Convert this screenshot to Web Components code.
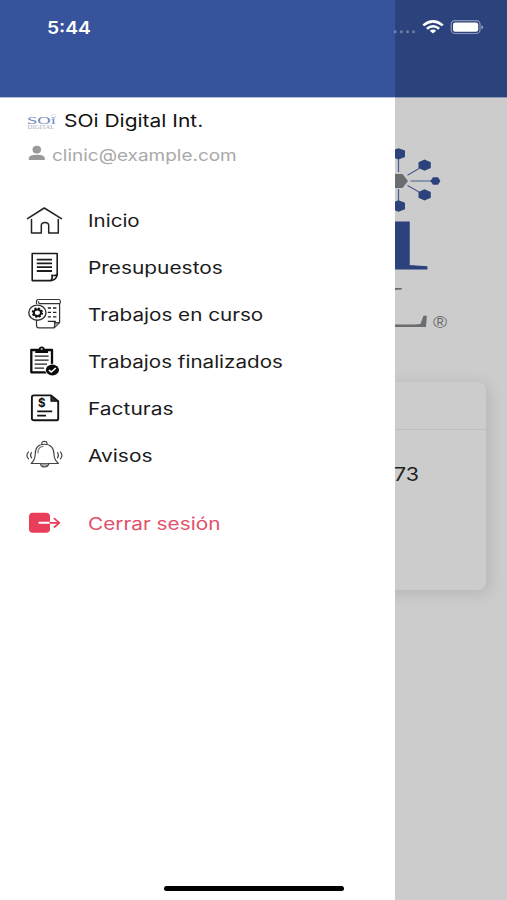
<!DOCTYPE html>
<html lang="es">
<head>
<meta charset="utf-8">
<title>SOi Digital</title>
<style>
  body {
    margin: 0;
    width: 507px;
    height: 900px;
    overflow: hidden;
    background: #fff;
    font-family: Inter, "Liberation Sans", sans-serif;
  }
</style>
</head>
<body>
<app-shell>
  <clinic-page slot="page"></clinic-page>
  <side-drawer slot="drawer">
    <user-card slot="user" name="SOi Digital Int." email="clinic@example.com"></user-card>
    <menu-item icon="home" width="52">Inicio</menu-item>
    <menu-item icon="budget" width="135">Presupuestos</menu-item>
    <menu-item icon="progress" width="175">Trabajos en curso</menu-item>
    <menu-item icon="done" width="195">Trabajos finalizados</menu-item>
    <menu-item icon="invoice" width="85">Facturas</menu-item>
    <menu-item icon="bell" width="64">Avisos</menu-item>
    <menu-item icon="logout" width="132" class="danger">Cerrar sesión</menu-item>
  </side-drawer>
  <status-bar slot="status" time="5:44"></status-bar>
</app-shell>

<script>
const define = (name, css, html, setup) => {
  const template = document.createElement('template');
  template.innerHTML = `<style>${css}</style>${html}`;

  customElements.define(name, class extends HTMLElement {
    connectedCallback() {
      if (this.shadowRoot) return;
      let shadow = this.attachShadow({ mode: 'open' });
      shadow.appendChild(template.content.cloneNode(true));
      setup?.(this, shadow);
    }
  });
};

const icons = {
  home: `<g fill="none" stroke="#222" stroke-width="1.5" stroke-linecap="round" stroke-linejoin="round">
    <path d="M1.5 18.6 18.3 8 35.4 18.6"/>
    <path d="M5.5 19.5V33H15.3V25.4Q15.5 22.4 19 22.4T22.7 25.4V33H32.3V19.5"/></g>`,
  budget: `<g fill="none" stroke="#1c1c1c" stroke-width="1.6" stroke-linejoin="round">
    <path d="M6.2 6.5H31.2V28.3Q29.5 33.3 25 33.6H6.2Z"/>
    <path d="M25 33.4Q26.8 31.5 25.9 28.2Q29 29.2 31.2 27.5"/>
    <path d="M10.8 12.7H26M10.8 16.3H26M10.8 20.1H26M10.8 24H26" stroke-width="1.8"/></g>`,
  progress: `<g fill="none" stroke="#333" stroke-width="1.2" stroke-linejoin="round">
    <path d="M10.5 10V7.3Q10.5 5.5 13 5.5H33Q34.4 5.5 34.4 7.5T33.4 9.7H13.6Q12.2 9.2 12.6 7.4"/>
    <path d="M33.6 9.7V28.6L28.2 33.8H12.6Q10.5 33.8 10.5 31.6V26"/>
    <path d="M28 33.6Q29.4 31.2 28.4 28.4Q31 29.2 33.4 28.4" fill="#aaa"/>
    <ellipse cx="11.4" cy="18.7" rx="8.6" ry="7.6" fill="#fff" stroke-width="1.4"/>
    <ellipse cx="11.4" cy="18.7" rx="3.6" ry="3.2" stroke="#111" stroke-width="2"/>
    <ellipse cx="11.4" cy="18.7" rx="5" ry="4.5" stroke="#111" stroke-width="1.4" stroke-dasharray="2.1 1.63"/>
    <path d="M21.8 14H25M27 14H30.4M21.8 18.4H25M27 18.4H30.4M21.8 22.8H25M27 22.8H30.4M21.8 27.4H29.8" stroke="#222" stroke-width="1.3"/></g>`,
  done: `<g>
    <path d="M5.3 9H26V31.3H5.3Z" fill="#fff" stroke="#0b0b0b" stroke-width="2.3" stroke-linejoin="round"/>
    <path d="M9.3 11.9V9.6Q9.6 8.4 12.7 8.2Q13 5.6 15.7 5.6T18.8 8.2Q21.6 8.4 22 9.6V11.9Z" fill="#0b0b0b"/>
    <ellipse cx="15.7" cy="8" rx="1.1" ry=".8" fill="#fff"/>
    <path d="M8.6 15.2H22.6M8.6 19.1H22.6M8.6 23.1H21M8.6 27.1H18" stroke="#222" stroke-width="1.3"/>
    <ellipse cx="26.4" cy="29" rx="7.3" ry="6.2" fill="#fff"/>
    <ellipse cx="26.4" cy="29" rx="6.6" ry="5.4" fill="#0b0b0b"/>
    <path d="M22.9 29.1 25.3 31 29.8 27" fill="none" stroke="#fff" stroke-width="1.6"/></g>`,
  invoice: `<g fill="none" stroke="#151515" stroke-width="1.9" stroke-linejoin="round">
    <path d="M8 7.4H25L32.2 13.2V30.4Q32.2 32.3 30 32.3H8Q5.9 32.3 5.9 30.4V9.3Q5.9 7.4 8 7.4Z"/>
    <path d="M25 7.6V13.2H32Z" fill="#333" stroke-width="1.2"/>
    <path d="M11.2 23.4H26.2M11.2 27.7H20" stroke-width="1.7"/></g>
    <text x="15.8" y="19.3" text-anchor="middle" font-size="11.5" font-weight="700" fill="#111">$</text>`,
  bell: `<g fill="none" stroke="#444" stroke-width="1.15" stroke-linejoin="round" stroke-linecap="round">
    <path d="M15.8 9.4V8Q16 6.4 18.4 6.4T21 8V9.4"/>
    <path d="M5.2 28.5Q9.1 25 9.2 19.5Q9 9.2 18.4 9.2T28 19.5Q28.2 25 32.5 28.5Z"/>
    <path d="M12 18Q11.8 12 17 11.4" stroke="#777"/>
    <path d="M14.4 28.8Q15.2 32 18.5 32T22.9 28.8" fill="#aaa"/>
    <path d="M5.5 17.5Q3.6 20.2 5.5 23M2.5 16.8Q-.7 20.3 2.5 23.8M31.5 17.5Q33.4 20.2 31.5 23M34.4 16.8Q37.5 20.3 34.4 23.8"/></g>`,
  logout: `<g fill="none" stroke-linecap="round" stroke-linejoin="round">
    <rect x="3" y="9.8" width="21" height="19.9" rx="3.8" fill="#e83e5a"/>
    <path d="M13.3 19.8H24" stroke="#fff" stroke-width="1.9"/>
    <path d="M24.2 19.8H33.2M28.4 15.6 33.4 19.8 28.4 24" stroke="#e83e5a" stroke-width="1.7"/></g>`
};

// text stretched sideways to a given width
define('wide-text', `
:host {
  display: block;
  width: var(--w);
  white-space: nowrap;
}
span {
  display: inline-block;
  transform-origin: 0 50%;
}`, `<span><slot></slot></span>`, (host, shadow) => {
  const w = Number(host.getAttribute('width'));
  const span = shadow.querySelector('span');
  host.style.setProperty('--w', w + 'px');
  span.style.transform = `scaleX(${w / span.offsetWidth})`;
});

define('menu-item', `
:host {
  display: flex;
  align-items: center;
  gap: 24px;
  height: 47px;
  color: #1b1b1b;
  font-size: 17px;
  line-height: 24px;
}
:host(.danger) {
  margin-top: 21px;
  color: #e3506a;
}
svg {
  flex: none;
  overflow: visible;
}
wide-text {
  padding-top: 1px;
}`, `<svg width="38" height="40" viewBox="0 0 38 40"></svg>`, (host, shadow) => {
  shadow.querySelector('svg').innerHTML = icons[host.getAttribute('icon')];
  const text = document.createElement('wide-text');
  text.setAttribute('width', host.getAttribute('width'));
  text.append(document.createElement('slot'));
  shadow.append(text);
});

define('user-card', `
:host {
  display: grid;
  gap: 10px;
}
div {
  display: flex;
  align-items: center;
  gap: 7px;
  height: 24px;
  font-size: 17.5px;
  line-height: 24px;
  color: #111;
}
.email {
  font-size: 16.5px;
  color: #a9a9a9;
}
.email svg {
  margin-top: -4px;
}`, `
<div class="name">
  <svg width="31" height="18" viewBox="0 0 31 18" font-family="Liberation Serif, serif">
    <text x="1" y="12.3" font-size="11" fill="#7189bd" textLength="29" lengthAdjust="spacingAndGlyphs">SOi</text>
    <text x="1.5" y="16.8" font-size="5.2" fill="#a9aeb8" textLength="27" lengthAdjust="spacingAndGlyphs">DIGITAL</text>
    <circle cx="27.5" cy="4.6" r="2.3" fill="none" stroke="#9db0d6" stroke-width=".8" stroke-dasharray="1 .8"/>
  </svg>
</div>
<div class="email">
  <svg width="19" height="20" viewBox="0 0 19 20" fill="#999">
    <ellipse cx="10.8" cy="6.6" rx="4.3" ry="3.9"/>
    <path d="M2.8 17V15Q3.4 11.8 10.8 11.8T18.8 15V17Z"/>
  </svg>
</div>`, (host, shadow) => {
  const widths = { name: 139, email: 185 };
  for (const key in widths) {
    const text = document.createElement('wide-text');
    text.setAttribute('width', widths[key]);
    text.textContent = host.getAttribute(key);
    shadow.querySelector('.' + key).append(text);
  }
});

define('side-drawer', `
:host {
  display: flex;
  flex-direction: column;
  width: 395px;
  height: 900px;
  background: #fff;
}
header {
  flex: none;
  height: 97px;
  background: #36539b;
  border-bottom: 1px solid #b5c1df;
}
section {
  padding: 11px 26px 0;
}
nav {
  padding: 29.5px 26px 0;
}`, `<header></header><section><slot name="user"></slot></section><nav><slot></slot></nav>`);

define('status-bar', `
:host {
  display: flex;
  justify-content: space-between;
  height: 54px;
  padding: 0 23px 0 47px;
  color: #fff;
  font-size: 17.5px;
  font-weight: 600;
  line-height: 55px;
}`, `
<svg width="92" height="54" viewBox="392 0 92 54">
  <g fill="#fff" opacity=".32"><circle cx="395.2" cy="31.7" r="1.5"/><circle cx="401.4" cy="31.7" r="1.5"/><circle cx="407.5" cy="31.7" r="1.5"/><circle cx="413.5" cy="31.7" r="1.5"/></g>
  <g fill="none" stroke="#fff" stroke-width="2.5">
    <path d="M423.3 25.4Q433 17.4 442.8 25.4"/>
    <path d="M426.9 28.8Q433 23.7 439.2 28.8"/>
  </g>
  <path d="M429.8 30.8Q433 28.3 436.2 30.8L433 33.6Z" fill="#fff"/>
  <rect x="451.2" y="20.7" width="28.8" height="12.8" rx="3.6" fill="none" stroke="#fff" stroke-opacity=".45" stroke-width="1.2"/>
  <rect x="453" y="22.4" width="25.2" height="9.4" rx="2.2" fill="#fff"/>
  <path d="M481.4 25.2Q483.2 25.7 483.2 27.2T481.4 29.2Z" fill="#fff" opacity=".5"/>
</svg>`, (host, shadow) => {
  const clock = document.createElement('wide-text');
  clock.setAttribute('width', 44);
  clock.textContent = host.getAttribute('time');
  shadow.querySelector('svg').before(clock);
});

define('result-card', `
:host {
  display: grid;
  grid-template-rows: 48px 1fr;
  height: 208px;
  margin: 0 21px;
  border-radius: 8px;
  background: #fff;
  box-shadow: 3px 3px 16px rgba(0, 0, 0, .12);
}
header {
  border-bottom: 1px solid #eee;
}
div {
  display: flex;
  justify-content: flex-end;
  padding: 32px 67px 0 0;
  font-size: 18px;
  line-height: 26px;
  color: #222;
}`, `<header></header><div><slot></slot></div>`);

define('clinic-page', `
:host {
  display: flex;
  flex-direction: column;
  height: 900px;
  background: #fff;
}
header {
  height: 97px;
  background: #36539b;
  border-bottom: 1px solid #b5c1df;
}
svg {
  display: block;
  margin-bottom: 24px;
}`, `
<header></header>
<svg width="507" height="260" viewBox="0 98 507 260" font-family="Liberation Serif, serif">
  <g stroke="#5d75b4" stroke-width="1.2">
    <path d="M398.5 159V172M398.5 189V201M407.5 175.2 419.5 168.3M407.5 185.5 419.5 192.3M410.5 181H432"/>
  </g>
  <g fill="#36539b">
    <path d="M398.5 148.2 405 150.6V157L398.5 159.6 392 157V150.6Z"/>
    <path d="M398.5 200.3 405 202.8V209.2L398.5 211.8 392 209.2V202.8Z"/>
    <path d="M424.5 159.5 430.8 162.2V168L424.5 170.8 418.5 168V162.2Z"/>
    <path d="M424.5 189.2 430.8 192V197.8L424.5 200.6 418.5 197.8V192Z"/>
    <path d="M433 177.3H438L440.4 181L438 184.7H433L430.4 181Z"/>
  </g>
  <path d="M391 174H402.5L408 181L402.5 188H391Z" fill="#84898c"/>
  <text transform="translate(430.5 268.5) scale(2.2 1)" text-anchor="end" font-size="102" fill="#36539b" stroke="#36539b" stroke-width="1">ı</text>
  <text transform="translate(433 327) scale(1.75 1)" text-anchor="end" font-size="59" fill="#84898c">L</text>
  <text transform="translate(440 328) scale(1.2 1)" text-anchor="middle" font-family="Liberation Sans, sans-serif" font-size="16" fill="#84898c">®</text>
</svg>
<result-card><wide-text width="25">73</wide-text></result-card>`);

define('app-shell', `
:host {
  display: grid;
  width: 507px;
  height: 900px;
  grid-template: 900px / 507px;
  overflow: hidden;
}
::slotted(*), .scrim, .home {
  grid-area: 1 / 1;
}
.scrim {
  background: rgba(0, 0, 0, .2);
}
.home {
  place-self: end center;
  width: 180px;
  height: 5px;
  margin-bottom: 9px;
  border-radius: 3px;
  background: #000;
}`, `
<slot name="page"></slot>
<div class="scrim"></div>
<slot name="drawer"></slot>
<slot name="status"></slot>
<div class="home"></div>`);
</script>
</body>
</html>
